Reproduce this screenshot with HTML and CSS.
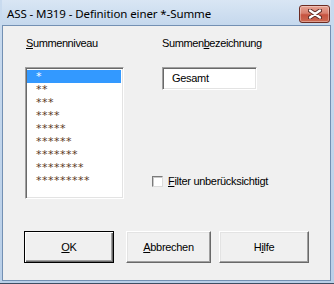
FILE: index.html
```html
<!DOCTYPE html>
<html>
<head>
<meta charset="utf-8">
<title>ASS - M319</title>
<link rel="stylesheet" href="styles.css">
</head>
<body>
<div class="window">
  <div class="titlebar">
    <span class="title">ASS - M319 - Definition einer *-Summe</span>
    <span class="close">
      <svg width="14" height="10" viewBox="0 0 14 10">
        <path d="M2 1.5 L12 8.5 M12 1.5 L2 8.5" stroke="#5a2a24" stroke-width="4.2" stroke-linecap="round"/>
        <path d="M2 1.5 L12 8.5 M12 1.5 L2 8.5" stroke="#ffffff" stroke-width="2.2" stroke-linecap="round"/>
      </svg>
    </span>
  </div>
  <div class="client">
    <div class="panes">
      <div class="pane-left">
        <div class="label"><u>S</u>ummenniveau</div>
        <div class="listbox">
          <div class="item selected">*</div>
          <div class="item">**</div>
          <div class="item">***</div>
          <div class="item">****</div>
          <div class="item">*****</div>
          <div class="item">******</div>
          <div class="item">*******</div>
          <div class="item">********</div>
          <div class="item">*********</div>
        </div>
      </div>
      <div class="pane-right">
        <div class="label indent">Summen<u>b</u>ezeichnung</div>
        <div class="textbox">Gesamt</div>
        <div class="check">
          <span class="box"></span>
          <span class="check-label"><u>F</u>ilter unberücksichtigt</span>
        </div>
      </div>
    </div>
    <div class="buttons">
      <div class="btn default btn-ok"><span><u>O</u>K</span></div>
      <div class="btn btn-cancel"><span><u>A</u>bbrechen</span></div>
      <div class="btn btn-help"><span>H<u>i</u>lfe</span></div>
    </div>
  </div>
</div>
</body>
</html>
```

FILE: styles.css
```css
html, body {
  margin: 0;
  padding: 0;
  background: #f0f0f0;
}

.window {
  width: 334px;
  height: 284px;
  box-sizing: border-box;
  background: linear-gradient(#c9dbef, #b9cfe8);
  border-bottom: 1px solid #3c4e63;
  padding: 0 3px 2px 2px;
  display: flex;
  flex-direction: column;
}

.titlebar {
  height: 25px;
  display: flex;
  align-items: center;
  justify-content: space-between;
  padding: 0 0 0 5px;
  background: linear-gradient(#d9e6f4, #c5d8ed);
}

.title {
  font-family: "Noto Sans", "Open Sans", sans-serif;
  font-size: 11.5px;
  letter-spacing: -0.1px;
  color: #000;
  line-height: 16px;
  margin-top: 2px;
}

.close {
  width: 29px;
  height: 16px;
  margin-right: 1px;
  margin-top: 2px;
  border: 1px solid #6b2b22;
  border-radius: 3px;
  background: linear-gradient(#e7a394 0%, #d8806f 45%, #c65340 55%, #cc6a52 100%);
  box-shadow: inset 0 0 0 1px rgba(255, 255, 255, 0.35);
  display: flex;
  align-items: center;
  justify-content: center;
}

.client {
  flex: 1;
  background: #f0f0f0;
  border: 1px solid #7390b3;
  padding: 11px 0 0 22px;
  font-family: "Liberation Sans", Arial, sans-serif;
  font-size: 11px;
  color: #000;
}

.panes {
  display: flex;
}

.pane-left {
  width: 99px;
}

.pane-right {
  margin-left: 28px;
}

.label {
  line-height: 13px;
  height: 13px;
  padding-left: 1px;
  letter-spacing: -0.4px;
  white-space: nowrap;
}

.label.indent {
  padding-left: 10px;
}

.listbox {
  margin-top: 17px;
  width: 99px;
  height: 132px;
  box-sizing: border-box;
  background: #fff;
  border: 1px solid;
  border-color: #a0a0a0 #ffffff #ffffff #a0a0a0;
  box-shadow: inset 1px 1px 0 #696969, inset -1px -1px 0 #e3e3e3;
  padding: 2px 2px 0 1px;
}

.item {
  height: 13px;
  line-height: 14px;
  padding-left: 9px;
  font-family: "DejaVu Sans", sans-serif;
  font-size: 11px;
  letter-spacing: 0.5px;
  color: #5a3a1e;
}

.item.selected {
  background: #3399ff;
  color: #fff;
}

.textbox {
  margin: 17px 0 0 10px;
  width: 95px;
  height: 23px;
  box-sizing: border-box;
  background: #fff;
  border: 1px solid;
  border-color: #a0a0a0 #ffffff #ffffff #a0a0a0;
  box-shadow: inset 1px 1px 0 #696969, inset -1px -1px 0 #e3e3e3;
  padding-left: 9px;
  line-height: 21px;
  letter-spacing: -0.3px;
}

.check {
  margin-top: 86px;
  display: flex;
  align-items: center;
  height: 11px;
}

.box {
  width: 11px;
  height: 11px;
  box-sizing: border-box;
  background: #fff;
  border: 1px solid;
  border-color: #7a7a7a #dcdcdc #dcdcdc #7a7a7a;
  box-shadow: inset 1px 1px 0 #c8c8c8;
}

.check-label {
  margin-left: 5px;
  line-height: 13px;
  letter-spacing: -0.3px;
  white-space: nowrap;
}

.buttons {
  display: flex;
  margin: 32px 0 0 -1px;
}

.btn {
  height: 32px;
  box-sizing: border-box;
  background: #f0f0f0;
  border: 1px solid;
  border-color: #ffffff #696969 #696969 #ffffff;
  box-shadow: inset -1px -1px 0 #a0a0a0, inset 1px 1px 0 #e3e3e3;
  display: flex;
  align-items: center;
  justify-content: center;
  letter-spacing: -0.3px;
}

.btn.default {
  border-color: #000;
  box-shadow: inset 1px 1px 0 #ffffff, inset -1px -1px 0 #696969, inset -2px -2px 0 #a0a0a0;
}

.btn-ok {
  width: 90px;
}

.btn-cancel {
  width: 85px;
  margin-left: 12px;
}

.btn-help {
  width: 90px;
  margin-left: 8px;
}
```
